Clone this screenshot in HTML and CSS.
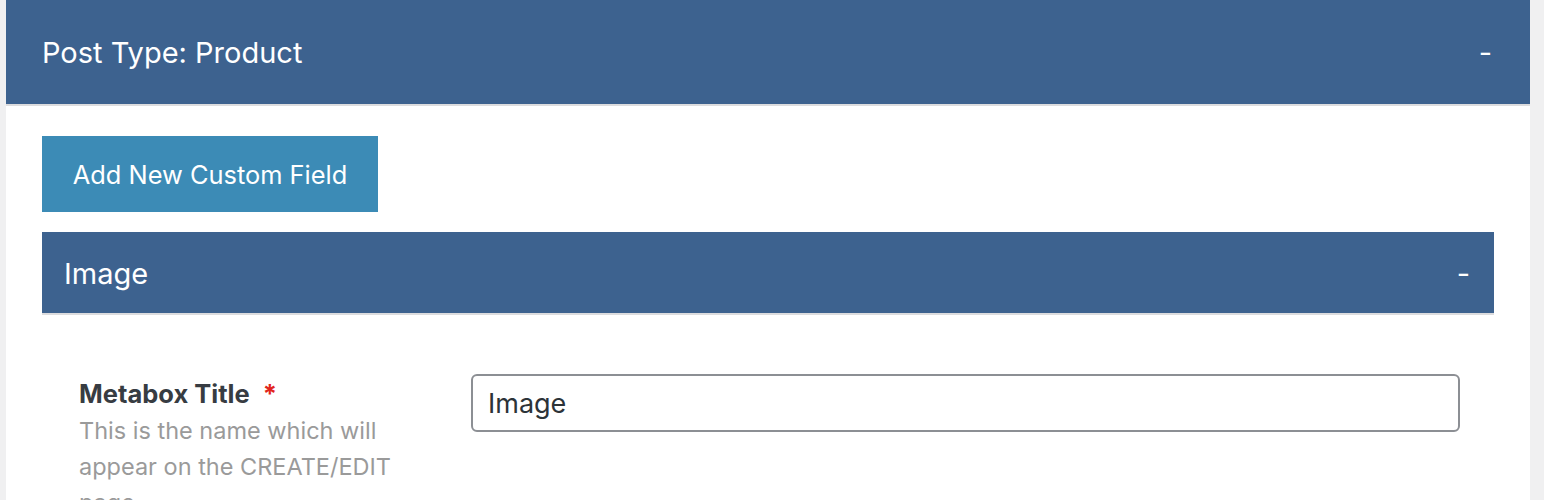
FILE: index.html
```html
<!DOCTYPE html>
<html>
<head>
<meta charset="utf-8">
<link rel="stylesheet" href="styles.css">
</head>
<body>
<div class="page">
  <section class="panel">
    <header class="panel-head">
      <h2 class="panel-title">Post Type: Product</h2>
      <span class="toggle">-</span>
    </header>
    <div class="panel-body">
      <button class="btn-add" type="button">Add New Custom Field</button>
      <section class="field-box">
        <header class="field-head">
          <h3 class="field-title">Image</h3>
          <span class="toggle">-</span>
        </header>
        <div class="field-body">
          <div class="row">
            <div class="label-col">
              <div class="label">Metabox Title <span class="req">*</span></div>
              <p class="desc">This is the name which will appear on the CREATE/EDIT page</p>
            </div>
            <div class="input-col">
              <input class="text-input" type="text" value="Image">
            </div>
          </div>
        </div>
      </section>
    </div>
  </section>
</div>
</body>
</html>
```
FILE: styles.css
```css
html, body {
  margin: 0;
  padding: 0;
  background: #f0f0f1;
  font-family: Inter, "Noto Sans", sans-serif;
}
.page {
  padding: 0 14px 0 6px;
  height: 500px;
  overflow: hidden;
}
.panel {
  background: #fff;
  min-height: 500px;
}
.panel-head {
  height: 104px;
  background: #3d628f;
  border-bottom: 2px solid #dcdcde;
  display: flex;
  align-items: center;
  justify-content: space-between;
  padding: 0 38px 0 36px;
  color: #fff;
}
.panel-title {
  margin: 0;
  font-size: 29px;
  font-weight: 400;
}
.toggle {
  font-size: 29px;
  color: #fff;
}
.panel-body {
  padding: 30px 36px 0 36px;
}
.btn-add {
  display: block;
  width: 336px;
  height: 76px;
  background: #3c8bb6;
  border: none;
  color: #fff;
  font-family: Inter, "Noto Sans", sans-serif;
  font-size: 25.4px;
  padding: 0;
  margin: 0 0 20px 0;
}
.field-box {
  background: #fff;
}
.field-head {
  height: 79px;
  background: #3d628f;
  border-bottom: 2px solid #dcdcde;
  display: flex;
  align-items: center;
  justify-content: space-between;
  padding: 2px 24px 0 22px;
  box-sizing: content-box;
  color: #fff;
}
.field-title {
  margin: 0;
  font-size: 29px;
  font-weight: 400;
}
.field-body {
  padding: 59px 34px 0 37px;
}
.row {
  display: flex;
  align-items: flex-start;
}
.label-col {
  width: 392px;
  flex: none;
  padding-top: 3px;
}
.label {
  font-size: 25.5px;
  font-weight: 700;
  color: #373c42;
  line-height: 34px;
}
.req {
  color: #e2261c;
  margin-left: 7px;
}
.desc {
  margin: 2px 0 0 0;
  font-size: 23.5px;
  line-height: 36px;
  color: #9a9a9a;
  width: 320px;
}
.input-col {
  flex: 1;
}
.text-input {
  box-sizing: border-box;
  width: 100%;
  height: 58px;
  border: 2px solid #8c8f94;
  border-radius: 6px;
  padding: 0 15px;
  font-family: Inter, "Noto Sans", sans-serif;
  font-size: 27px;
  color: #2c3338;
  background: #fff;
}
```
